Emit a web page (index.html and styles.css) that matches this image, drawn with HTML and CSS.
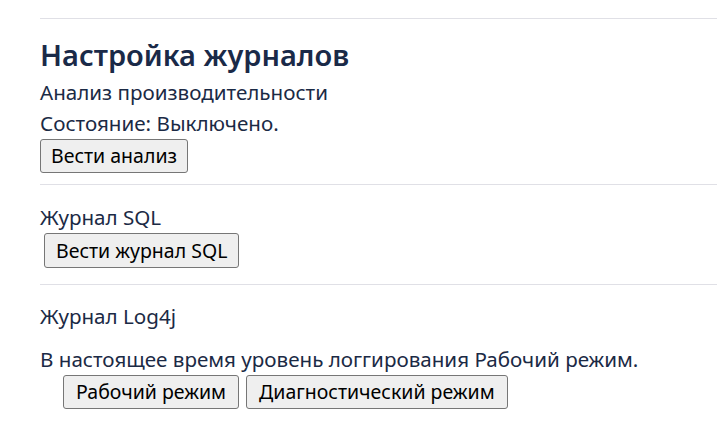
FILE: index.html
```html
<!DOCTYPE html>
<html lang="ru">
<head>
<meta charset="utf-8">
<title>Настройка журналов</title>
<link rel="stylesheet" href="styles.css">
</head>
<body>
<div class="page">
  <section class="block block-first">
    <h2 class="title">Настройка журналов</h2>
    <div class="line">Анализ производительности</div>
    <div class="line">Состояние: Выключено.</div>
    <div class="actions"><button class="btn">Вести анализ</button></div>
  </section>
  <section class="block">
    <div class="line line-sql">Журнал SQL</div>
    <div class="actions actions-sql"><button class="btn">Вести журнал SQL</button></div>
  </section>
  <section class="block">
    <div class="line line-log">Журнал Log4j</div>
    <div class="line line-level">В настоящее время уровень логгирования Рабочий режим.</div>
    <div class="actions actions-modes">
      <button class="btn">Рабочий режим</button>
      <button class="btn">Диагностический режим</button>
    </div>
  </section>
</div>
</body>
</html>
```

FILE: styles.css
```css
html, body {
  margin: 0;
  padding: 0;
  background: #ffffff;
}

body {
  font-family: "Noto Sans", "Open Sans", sans-serif;
  font-size: 20.6px;
  color: #1b2a45;
}

.page {
  padding: 18px 0 0 40px;
}

.block {
  border-top: 1px solid #e0e0e6;
}

.title {
  margin: 14px 0 0 0;
  font-size: 29px;
  line-height: 44px;
  font-weight: 600;
  color: #1a2a48;
}

.line {
  line-height: 30px;
  height: 31px;
  white-space: nowrap;
}

.actions {
  display: flex;
  gap: 7px;
  padding-bottom: 11px;
}

.btn {
  font-family: inherit;
  font-size: 19.5px;
  color: #000;
  background: #efefef;
  border: 1px solid #767676;
  border-radius: 3px;
  height: 34px;
  padding: 0 10px;
  line-height: 30px;
  margin: 0;
}

.line-sql {
  margin-top: 17px;
}

.actions-sql {
  padding-left: 4px;
  padding-bottom: 16px;
}

.actions-sql .btn {
  height: 35px;
  padding: 0 11px;
}

.line-log {
  margin-top: 16px;
}

.line-level {
  margin-top: 12px;
}

.actions-modes {
  padding-left: 23px;
}

.actions-modes .btn {
  padding: 0 12px;
}
```
